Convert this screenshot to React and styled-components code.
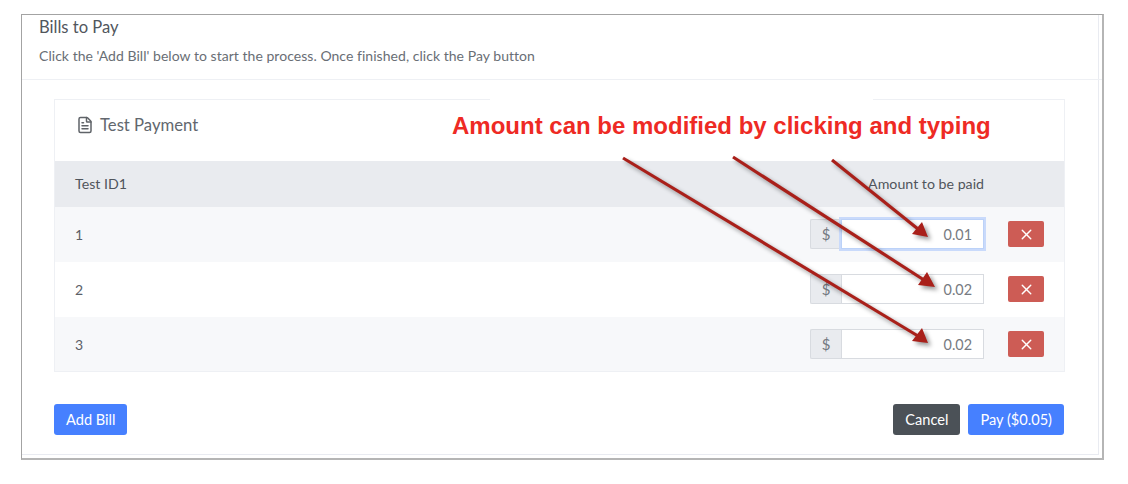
import styled, { createGlobalStyle } from "styled-components";
import { FileText, X } from "lucide-react";

const bills = [
  { id: 1, amount: "0.01", focused: true },
  { id: 2, amount: "0.02" },
  { id: 3, amount: "0.02" },
];

const arrows = [
  { x1: 832, y1: 160, tip: "928,237 912,234 922,222", x2: 918, y2: 229 },
  { x1: 733, y1: 157, tip: "935,287 918,285 927,272", x2: 924, y2: 280 },
  { x1: 623, y1: 158, tip: "928,343 912,341 922,328", x2: 918, y2: 336 },
];

function App() {
  return (
    <Page>
      <GlobalStyle />
      <Frame>
        <Header>
          <Title>Bills to Pay</Title>
          <Hint>Click the 'Add Bill' below to start the process. Once finished, click the Pay button</Hint>
        </Header>
        <Body>
          <Card>
            <CardHead>
              <FileText size={18} strokeWidth={2} />
              <CardTitle>Test Payment</CardTitle>
            </CardHead>
            <TableHead>
              <span>Test ID1</span>
              <span>Amount to be paid</span>
            </TableHead>
            {bills.map((bill, i) => (
              <Row key={bill.id} $striped={i % 2 === 0}>
                <span>{bill.id}</span>
                <RowActions>
                  <InputGroup>
                    <Prepend>$</Prepend>
                    <AmountInput $focused={bill.focused} defaultValue={bill.amount} />
                  </InputGroup>
                  <DeleteButton>
                    <X size={17} strokeWidth={2} />
                  </DeleteButton>
                </RowActions>
              </Row>
            ))}
          </Card>
          <Footer>
            <Button>Add Bill</Button>
            <FooterRight>
              <Button $dark>Cancel</Button>
              <Button>Pay ($0.05)</Button>
            </FooterRight>
          </Footer>
        </Body>
      </Frame>
      <Annotation>Amount can be modified by clicking and typing</Annotation>
      <ArrowLayer viewBox="0 0 1128 484">
        {arrows.map((a) => (
          <g key={a.x1}>
            <line x1={a.x1} y1={a.y1} x2={a.x2} y2={a.y2} stroke="#a9201a" strokeWidth="3.2" />
            <polygon points={a.tip} fill="#a9201a" />
          </g>
        ))}
      </ArrowLayer>
    </Page>
  );
}
export default App;

const GlobalStyle = createGlobalStyle`
  html, body {
    margin: 0;
    background: #fff;
  }
  * {
    box-sizing: border-box;
  }
`;

const Page = styled.div`
  position: relative;
  width: 1128px;
  height: 484px;
  padding: 14px 24px 0 21px;
  overflow: hidden;
  font-family: "Lato", "Noto Sans", sans-serif;
  font-size: 14px;
  color: #5b6067;
`;

const Frame = styled.div`
  height: 446px;
  background: #fff;
  border: 1px solid #a3a3a3;
  border-bottom: 2px solid #b5b5b5;
  border-right: 2px solid #b5b5b5;
  box-shadow: inset -3px -3px 0 #fff, inset -4px -4px 0 #e9ebf1;
`;

const Header = styled.div`
  height: 65px;
  padding: 3px 17px 0;
  border-bottom: 1px solid #eef0f4;
`;

const Title = styled.div`
  font-size: 16.6px;
  line-height: 19px;
  color: #51565d;
`;

const Hint = styled.div`
  margin-top: 9px;
  font-size: 14px;
  line-height: 19px;
  letter-spacing: 0.04px;
  color: #696e75;
`;

const Body = styled.div`
  padding: 19px 37px 0 32px;
`;

const Card = styled.div`
  border: 1px solid #eef0f4;
`;

const CardHead = styled.div`
  height: 61px;
  padding: 0 21px 12px;
  display: flex;
  align-items: center;
  gap: 6px;
  color: #5f6368;
`;

const CardTitle = styled.span`
  font-size: 16.7px;
  color: #62676e;
`;

const TableHead = styled.div`
  height: 46px;
  padding: 0 80px 2px 20px;
  display: flex;
  align-items: center;
  justify-content: space-between;
  background: #e9ebef;
  font-size: 14.2px;
  color: #50555c;
`;

const Row = styled.div`
  height: 55px;
  padding: 0 20px 1px;
  display: flex;
  align-items: center;
  justify-content: space-between;
  background: ${(p) => (p.$striped ? "#f7f8fa" : "#fff")};
  &:last-child {
    height: 54px;
    padding-bottom: 0;
  }
`;

const RowActions = styled.div`
  display: flex;
  align-items: center;
  gap: 24px;
`;

const InputGroup = styled.div`
  width: 174px;
  height: 30px;
  display: flex;
`;

const Prepend = styled.div`
  width: 31px;
  display: flex;
  align-items: center;
  justify-content: center;
  background: #e9ebef;
  border: 1px solid #d8dbe0;
  border-right: none;
  border-radius: 2px 0 0 2px;
  color: #737880;
  font-size: 15px;
`;

const AmountInput = styled.input`
  flex: 1;
  min-width: 0;
  padding: 0 11px;
  text-align: right;
  background: #fff;
  font: inherit;
  font-size: 14.4px;
  color: #777b82;
  outline: none;
  border: 1px solid ${(p) => (p.$focused ? "#bcd2f8" : "#d8dbe0")};
  box-shadow: ${(p) => (p.$focused ? "0 0 0 2px #c9dafb" : "none")};
`;

const DeleteButton = styled.button`
  width: 36px;
  height: 26px;
  padding: 0;
  display: flex;
  align-items: center;
  justify-content: center;
  background: #cd5c55;
  border: none;
  border-radius: 2px;
  color: #fff;
`;

const Footer = styled.div`
  margin-top: 32px;
  display: flex;
  justify-content: space-between;
`;

const FooterRight = styled.div`
  margin-right: 1px;
  display: flex;
  gap: 8px;
`;

const Button = styled.button`
  height: 31px;
  padding: 0 12px;
  background: ${(p) => (p.$dark ? "#4b5157" : "#4680ff")};
  border: none;
  border-radius: 3px;
  color: #fff;
  font-family: inherit;
  font-size: 14.6px;
`;

const Annotation = styled.div`
  position: absolute;
  left: 490px;
  top: 99px;
  width: 383px;
  height: 52px;
  background: #fff;
  font-family: "Liberation Sans", Arial, sans-serif;
  font-weight: 700;
  font-size: 24px;
  line-height: 54px;
  white-space: nowrap;
  color: #ee2a24;
  text-indent: -38px;
`;

const ArrowLayer = styled.svg`
  position: absolute;
  left: 0;
  top: 0;
  width: 1128px;
  height: 484px;
  pointer-events: none;
  filter: drop-shadow(3px 3px 2px rgba(0, 0, 0, 0.4));
`;
